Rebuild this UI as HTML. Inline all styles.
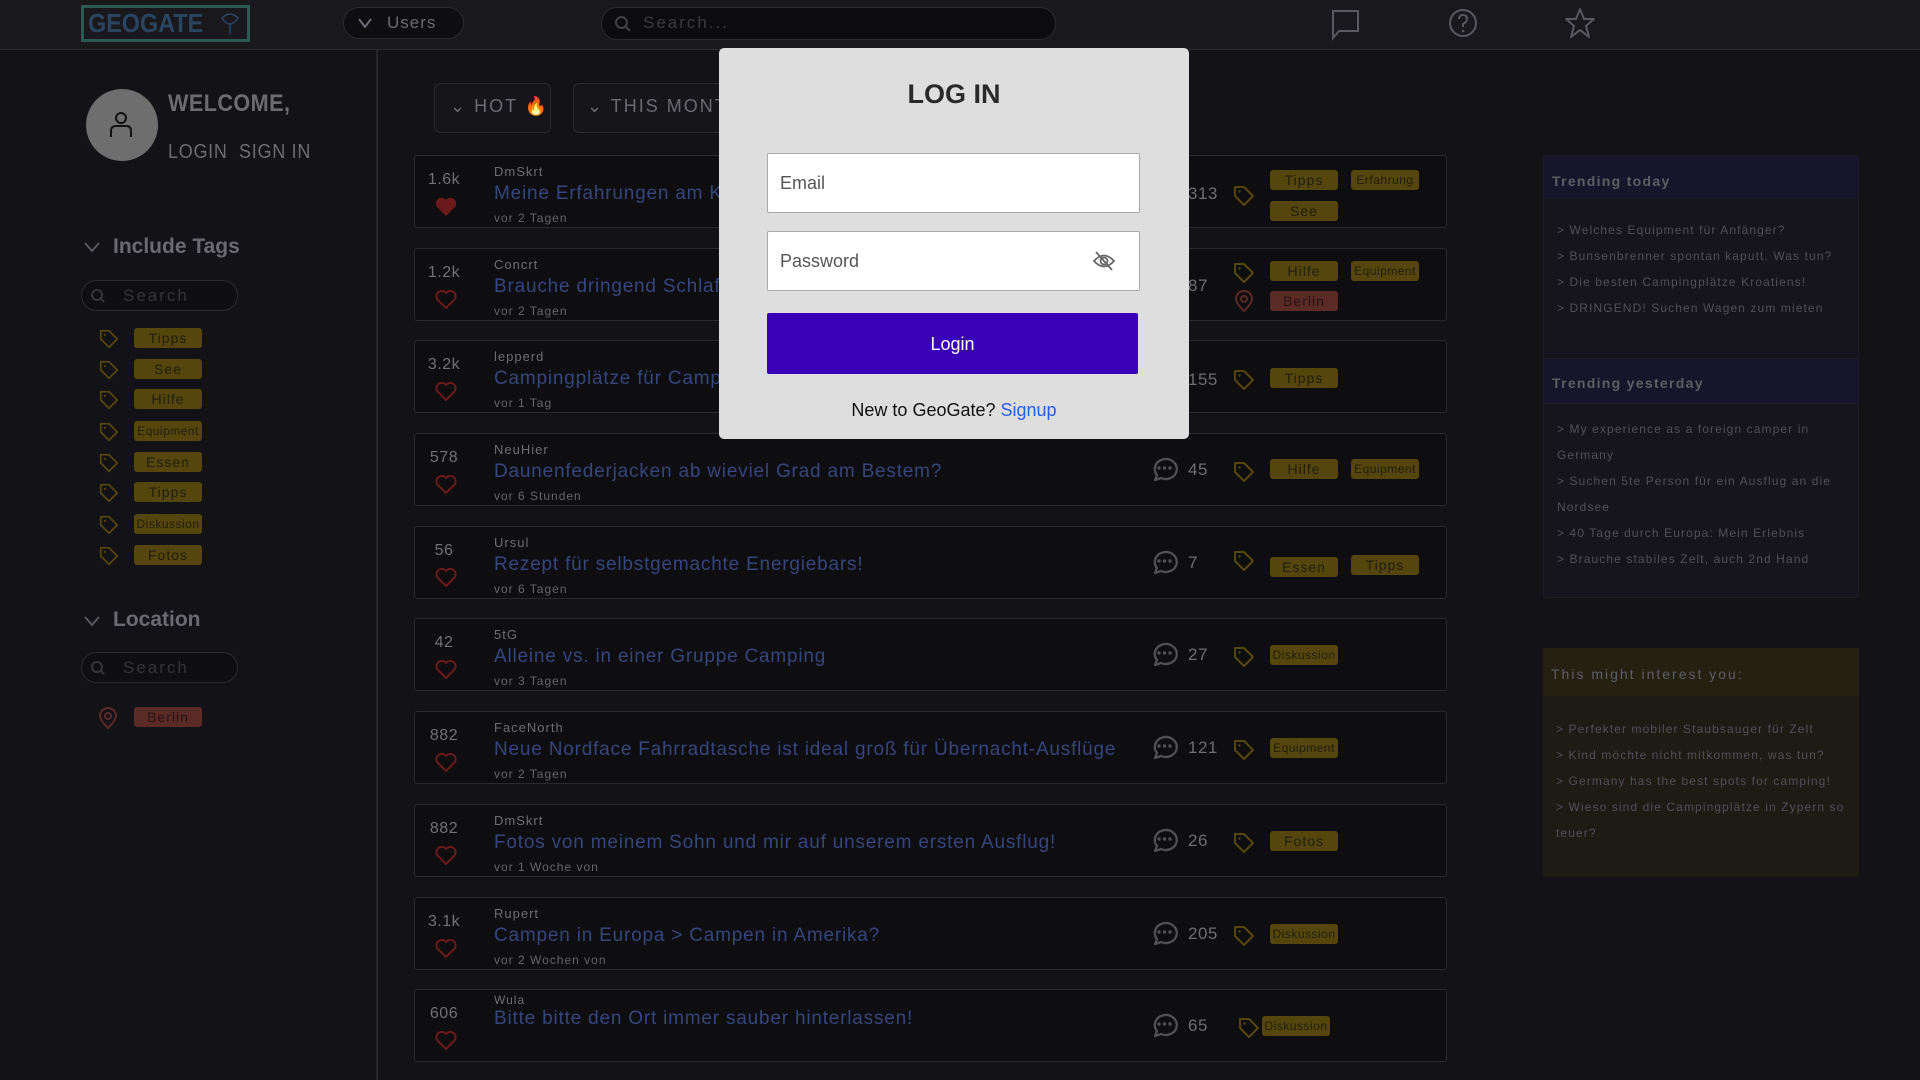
<!DOCTYPE html>
<html><head><meta charset="utf-8"><style>
*{margin:0;padding:0;box-sizing:border-box}
body{width:1920px;height:1080px;overflow:hidden;background:#121217;font-family:"Liberation Sans",sans-serif;position:relative}
.a{position:absolute}
.hdr{left:0;top:0;width:1920px;height:50px;background:#19191d;border-bottom:1px solid #2a2a2e}
.pill{border:1px solid #2c2c30;border-radius:16px;background:#0e0e11}
.tag{position:absolute;width:68px;height:20px;background:#54460c;border-radius:3px;color:#221d0c;font-size:14px;text-align:center;line-height:20px;letter-spacing:1px}
.tag.sm{font-size:12px;letter-spacing:.5px}
.loc{background:#5a2a26;color:#261412}
.card{position:absolute;left:414px;width:1033px;height:73px;border:1px solid #2a2a2e;border-radius:3px;background:#0e0e11}
.sc{position:absolute;left:0;width:58px;text-align:center;top:15px;color:#707075;font-size:16px;letter-spacing:.5px}
.hr{position:absolute;left:19px;top:38px}
.au{position:absolute;left:79px;top:8px;color:#6e6e72;font-size:13px;letter-spacing:1px}
.ti{position:absolute;left:79px;top:27px;color:#36457c;font-size:19px;letter-spacing:.8px;white-space:nowrap}
.dt{position:absolute;left:79px;top:55px;color:#66666a;font-size:12px;letter-spacing:1px}
.cm{position:absolute;left:734px;top:20px}
.cn{position:absolute;left:773px;top:26px;color:#6e6e72;font-size:17px;letter-spacing:.5px}
.ti2{position:absolute;left:817px;top:26px}
.rp{left:1543px;width:316px;border-radius:3px}
.rp .h{color:#5e5e66;font-weight:bold;font-size:14px;letter-spacing:1.3px;padding-left:8px}
.rp .i{color:#505058;font-size:12px;letter-spacing:1.1px;line-height:26px;padding-left:13px;padding-right:10px}
</style></head><body>
<div class="a hdr"></div>
<div class="a" style="left:81px;top:5px;width:169px;height:37px;border:3px solid #2b5a52"></div>
<div class="a" style="left:88px;top:8px;font-size:26px;font-weight:bold;color:#2b4560;transform:scaleX(.9);transform-origin:left">GEOGATE</div>
<svg class="a" style="left:219px;top:12px" width="22" height="24" viewBox="0 0 22 24"><path d="M3 6 Q11 -2 19 6 Q15 12 11 12 Q7 12 3 6Z M11 12 V22" fill="none" stroke="#2b4560" stroke-width="1.5"/></svg>
<div class="a pill" style="left:343px;top:7px;width:121px;height:32px"></div>
<svg class="a" style="left:357px;top:16px" width="16" height="14"><path d="M2 3 L8 11 L14 3" fill="none" stroke="#6a6a70" stroke-width="2"/></svg>
<div class="a" style="left:387px;top:13px;color:#6a6a70;font-size:17px;letter-spacing:1px">Users</div>
<div class="a pill" style="left:601px;top:7px;width:455px;height:33px;background:#0c0c0e"></div>
<svg class="a" style="left:614px;top:15px" width="18" height="18"><circle cx="7.5" cy="7.5" r="5.5" fill="none" stroke="#404046" stroke-width="2"/><path d="M12 12 L16 16" stroke="#404046" stroke-width="2"/></svg>
<div class="a" style="left:643px;top:13px;color:#3a3a40;font-size:17px;letter-spacing:2px">Search...</div>
<svg class="a" style="left:1330px;top:9px" width="30" height="32"><path d="M2 2 H28 V22 H9 L3 29 V2Z" fill="none" stroke="#58585e" stroke-width="2"/></svg>
<svg class="a" style="left:1448px;top:8px" width="30" height="30"><circle cx="15" cy="15" r="13" fill="none" stroke="#58585e" stroke-width="2"/><path d="M11 11 Q11 7 15 7 Q19 7 19 11 Q19 14 15 16 V19" fill="none" stroke="#58585e" stroke-width="2"/><circle cx="15" cy="23" r="1.3" fill="#58585e"/></svg>
<svg class="a" style="left:1564px;top:7px" width="32" height="32"><path d="M16 2 L20 12 L30 12 L22 19 L25 30 L16 23 L7 30 L10 19 L2 12 L12 12Z" fill="none" stroke="#58585e" stroke-width="2" stroke-linejoin="round"/></svg>

<div class="a" style="left:376px;top:50px;width:2px;height:1030px;background:#26262a"></div>
<div class="a" style="left:86px;top:89px;width:72px;height:72px;border-radius:50%;background:#6e6e6e"></div>
<svg class="a" style="left:108px;top:110px" width="26" height="30"><circle cx="13" cy="8" r="5" fill="none" stroke="#111" stroke-width="2"/><path d="M3 27 V21 Q3 16 8 16 H18 Q23 16 23 21 V27" fill="none" stroke="#111" stroke-width="2"/></svg>
<div class="a" style="left:168px;top:90px;color:#6c6c70;font-size:24px;font-weight:bold;letter-spacing:.5px;transform:scaleX(.9);transform-origin:left">WELCOME,</div>
<div class="a" style="left:168px;top:141px;color:#6c6c70;font-size:20px;letter-spacing:.8px;transform:scaleX(.9);transform-origin:left">LOGIN&nbsp; SIGN IN</div>

<svg class="a" style="left:83px;top:240px" width="18" height="14"><path d="M2 3 L9 11 L16 3" fill="none" stroke="#58585e" stroke-width="2"/></svg>
<div class="a" style="left:113px;top:235px;color:#6a6a70;font-size:21px;font-weight:bold">Include Tags</div>
<div class="a pill" style="left:81px;top:280px;width:157px;height:31px;background:#0f0f12"></div>
<svg class="a" style="left:90px;top:288px" width="16" height="16"><circle cx="7" cy="7" r="5" fill="none" stroke="#34343a" stroke-width="2"/><path d="M11 11 L14 14" stroke="#34343a" stroke-width="2"/></svg>
<div class="a" style="left:123px;top:286px;color:#34343a;font-size:17px;letter-spacing:2px">Search</div>

<svg width="0" height="0" style="position:absolute"><defs>
<symbol id="tg" viewBox="0 0 24 24"><path d="M3 3 H12 L21 12 L12 21 L3 12Z" fill="none" stroke="currentColor" stroke-width="2" stroke-linejoin="round"/><circle cx="7.5" cy="7.5" r="1.2" fill="currentColor"/></symbol>
<symbol id="pin" viewBox="0 0 24 24"><path d="M12 22 Q4 14 4 10 A8 8 0 0 1 20 10 Q20 14 12 22Z" fill="none" stroke="currentColor" stroke-width="2"/><circle cx="12" cy="10" r="3" fill="none" stroke="currentColor" stroke-width="2"/></symbol>
<symbol id="ht" viewBox="0 0 24 24"><path d="M12 21 L3.5 12.5 A5 5 0 0 1 12 6 A5 5 0 0 1 20.5 12.5Z" fill="none" stroke="currentColor" stroke-width="2" stroke-linejoin="round"/></symbol>
<symbol id="cb" viewBox="0 0 30 30"><path d="M6 26 L8 21 A11 10 0 1 1 12 24 Z" fill="none" stroke="currentColor" stroke-width="2.3" stroke-linejoin="round"/><circle cx="10" cy="14" r="1.7" fill="currentColor"/><circle cx="15.5" cy="14" r="1.7" fill="currentColor"/><circle cx="21" cy="14" r="1.7" fill="currentColor"/></symbol>
</defs></svg>

<svg class="a" style="left:98px;top:328px;color:#54460c" width="22" height="22"><use href="#tg"/></svg>
<svg class="a" style="left:98px;top:359px;color:#54460c" width="22" height="22"><use href="#tg"/></svg>
<svg class="a" style="left:98px;top:389px;color:#54460c" width="22" height="22"><use href="#tg"/></svg>
<svg class="a" style="left:98px;top:421px;color:#54460c" width="22" height="22"><use href="#tg"/></svg>
<svg class="a" style="left:98px;top:452px;color:#54460c" width="22" height="22"><use href="#tg"/></svg>
<svg class="a" style="left:98px;top:482px;color:#54460c" width="22" height="22"><use href="#tg"/></svg>
<svg class="a" style="left:98px;top:514px;color:#54460c" width="22" height="22"><use href="#tg"/></svg>
<svg class="a" style="left:98px;top:545px;color:#54460c" width="22" height="22"><use href="#tg"/></svg>
<div class="tag" style="left:134px;top:328px">Tipps</div>
<div class="tag" style="left:134px;top:359px">See</div>
<div class="tag" style="left:134px;top:389px">Hilfe</div>
<div class="tag sm" style="left:134px;top:421px">Equipment</div>
<div class="tag" style="left:134px;top:452px">Essen</div>
<div class="tag" style="left:134px;top:482px">Tipps</div>
<div class="tag sm" style="left:134px;top:514px">Diskussion</div>
<div class="tag" style="left:134px;top:545px">Fotos</div>

<svg class="a" style="left:83px;top:614px" width="18" height="14"><path d="M2 3 L9 11 L16 3" fill="none" stroke="#58585e" stroke-width="2"/></svg>
<div class="a" style="left:113px;top:608px;color:#6a6a70;font-size:21px;font-weight:bold">Location</div>
<div class="a pill" style="left:81px;top:652px;width:157px;height:31px;background:#0f0f12"></div>
<svg class="a" style="left:90px;top:660px" width="16" height="16"><circle cx="7" cy="7" r="5" fill="none" stroke="#34343a" stroke-width="2"/><path d="M11 11 L14 14" stroke="#34343a" stroke-width="2"/></svg>
<div class="a" style="left:123px;top:658px;color:#34343a;font-size:17px;letter-spacing:2px">Search</div>
<svg class="a" style="left:96px;top:706px;color:#5a2a26" width="24" height="24"><use href="#pin"/></svg>
<div class="tag loc" style="left:134px;top:707px">Berlin</div>

<div class="a" style="left:434px;top:83px;width:117px;height:50px;border:1px solid #2a2a2e;border-radius:6px;background:#16161a"></div>
<div class="a" style="left:450px;top:96px;color:#6a6a70;font-size:18px;letter-spacing:2px">&#8964; HOT <span style="color:#8a3a10">&#128293;</span></div>
<div class="a" style="left:573px;top:83px;width:160px;height:50px;border:1px solid #2a2a2e;border-radius:6px;background:#16161a"></div>
<div class="a" style="left:587px;top:96px;color:#6a6a70;font-size:18px;letter-spacing:2px">&#8964; THIS MONTH</div>

<div class="card" style="top:155px"><div class="sc">1.6k</div><svg class="hr" width="24" height="24"><path d="M12 22 L3 13 A5.5 5.5 0 0 1 12 6 A5.5 5.5 0 0 1 21 13Z" fill="#6a1a1a"/></svg><div class="au">DmSkrt</div><div class="ti">Meine Erfahrungen am Kap</div><div class="dt">vor 2 Tagen</div>
<div class="cn" style="top:28px">313</div><svg class="ti2" style="top:28px;color:#54460c" width="24" height="24"><use href="#tg"/></svg>
<div class="tag" style="left:855px;top:14px">Tipps</div><div class="tag sm" style="left:936px;top:14px">Erfahrung</div><div class="tag" style="left:855px;top:45px">See</div></div>

<div class="card" style="top:248px"><div class="sc">1.2k</div><svg class="hr" width="24" height="24" style="color:#6a1a1a"><use href="#ht"/></svg><div class="au">Concrt</div><div class="ti">Brauche dringend Schlafsack</div><div class="dt">vor 2 Tagen</div>
<div class="cn" style="top:27px">87</div><svg class="ti2" style="top:12px;color:#54460c" width="24" height="24"><use href="#tg"/></svg><svg class="ti2" style="top:40px;color:#5a2a26" width="24" height="24"><use href="#pin"/></svg>
<div class="tag" style="left:855px;top:12px">Hilfe</div><div class="tag sm" style="left:936px;top:12px">Equipment</div><div class="tag loc" style="left:855px;top:42px">Berlin</div></div>

<div class="card" style="top:340px"><div class="sc">3.2k</div><svg class="hr" width="24" height="24" style="color:#6a1a1a"><use href="#ht"/></svg><div class="au">lepperd</div><div class="ti">Campingplätze für Camper</div><div class="dt">vor 1 Tag</div>
<div class="cn" style="top:29px">155</div><svg class="ti2" style="top:27px;color:#54460c" width="24" height="24"><use href="#tg"/></svg>
<div class="tag" style="left:855px;top:27px">Tipps</div></div>

<div class="card" style="top:433px"><div class="sc">578</div><svg class="hr" width="24" height="24" style="color:#6a1a1a"><use href="#ht"/></svg><div class="au">NeuHier</div><div class="ti">Daunenfederjacken ab wieviel Grad am Bestem?</div><div class="dt">vor 6 Stunden</div>
<svg class="cm" width="30" height="30" style="color:#505055"><use href="#cb"/></svg><div class="cn">45</div><svg class="ti2" style="color:#54460c" width="24" height="24"><use href="#tg"/></svg>
<div class="tag" style="left:855px;top:25px">Hilfe</div><div class="tag sm" style="left:936px;top:25px">Equipment</div></div>

<div class="card" style="top:526px"><div class="sc">56</div><svg class="hr" width="24" height="24" style="color:#6a1a1a"><use href="#ht"/></svg><div class="au">Ursul</div><div class="ti">Rezept für selbstgemachte Energiebars!</div><div class="dt">vor 6 Tagen</div>
<svg class="cm" width="30" height="30" style="color:#505055"><use href="#cb"/></svg><div class="cn">7</div><svg class="ti2" style="top:22px;color:#54460c" width="24" height="24"><use href="#tg"/></svg>
<div class="tag" style="left:855px;top:30px">Essen</div><div class="tag" style="left:936px;top:28px">Tipps</div></div>

<div class="card" style="top:618px"><div class="sc">42</div><svg class="hr" width="24" height="24" style="color:#6a1a1a"><use href="#ht"/></svg><div class="au">5tG</div><div class="ti">Alleine vs. in einer Gruppe Camping</div><div class="dt">vor 3 Tagen</div>
<svg class="cm" width="30" height="30" style="color:#505055"><use href="#cb"/></svg><div class="cn">27</div><svg class="ti2" style="color:#54460c" width="24" height="24"><use href="#tg"/></svg>
<div class="tag sm" style="left:855px;top:26px">Diskussion</div></div>

<div class="card" style="top:711px"><div class="sc">882</div><svg class="hr" width="24" height="24" style="color:#6a1a1a"><use href="#ht"/></svg><div class="au">FaceNorth</div><div class="ti">Neue Nordface Fahrradtasche ist ideal groß für Übernacht-Ausflüge</div><div class="dt">vor 2 Tagen</div>
<svg class="cm" width="30" height="30" style="color:#505055"><use href="#cb"/></svg><div class="cn">121</div><svg class="ti2" style="color:#54460c" width="24" height="24"><use href="#tg"/></svg>
<div class="tag sm" style="left:855px;top:26px">Equipment</div></div>

<div class="card" style="top:804px"><div class="sc">882</div><svg class="hr" width="24" height="24" style="color:#6a1a1a"><use href="#ht"/></svg><div class="au">DmSkrt</div><div class="ti">Fotos von meinem Sohn und mir auf unserem ersten Ausflug!</div><div class="dt">vor 1 Woche von</div>
<svg class="cm" width="30" height="30" style="color:#505055"><use href="#cb"/></svg><div class="cn">26</div><svg class="ti2" style="color:#54460c" width="24" height="24"><use href="#tg"/></svg>
<div class="tag" style="left:855px;top:26px">Fotos</div></div>

<div class="card" style="top:897px"><div class="sc">3.1k</div><svg class="hr" width="24" height="24" style="color:#6a1a1a"><use href="#ht"/></svg><div class="au">Rupert</div><div class="ti">Campen in Europa &gt; Campen in Amerika?</div><div class="dt">vor 2 Wochen von</div>
<svg class="cm" width="30" height="30" style="color:#505055"><use href="#cb"/></svg><div class="cn">205</div><svg class="ti2" style="color:#54460c" width="24" height="24"><use href="#tg"/></svg>
<div class="tag sm" style="left:855px;top:26px">Diskussion</div></div>

<div class="card" style="top:989px"><div class="sc">606</div><svg class="hr" width="24" height="24" style="color:#6a1a1a"><use href="#ht"/></svg><div class="au" style="top:3px;font-size:12px">Wula</div><div class="ti" style="top:18px">Bitte bitte den Ort immer sauber hinterlassen!</div>
<svg class="cm" width="30" height="30" style="color:#505055"><use href="#cb"/></svg><div class="cn">65</div><svg class="ti2" style="left:822px;color:#54460c" width="24" height="24"><use href="#tg"/></svg>
<div class="tag sm" style="left:847px;top:26px">Diskussion</div></div>

<div class="a rp" style="top:155px;height:443px;background:#16141d;border:1px solid #1e1b26">
<div style="height:43px;background:#17152a;border-bottom:1px solid #201c2a;padding-top:17px" class="h">Trending today</div>
<div class="i" style="padding-top:18px">&gt; Welches Equipment für Anfänger?<br>&gt; Bunsenbrenner spontan kaputt. Was tun?<br>&gt; Die besten Campingplätze Kroatiens!<br>&gt; DRINGEND! Suchen Wagen zum mieten</div>
<div style="position:absolute;top:202px;left:0;right:0;height:46px;background:#17152a;border-top:1px solid #201c2a;border-bottom:1px solid #201c2a;padding-top:16px" class="h">Trending yesterday</div>
<div class="i" style="position:absolute;top:260px;left:0">&gt; My experience as a foreign camper in Germany<br>&gt; Suchen 5te Person für ein Ausflug an die Nordsee<br>&gt; 40 Tage durch Europa: Mein Erlebnis<br>&gt; Brauche stabiles Zelt, auch 2nd Hand</div>
</div>
<div class="a rp" style="top:648px;height:229px;background:#1e1b14">
<div style="height:48px;background:#252012;padding-top:18px;font-weight:normal;letter-spacing:2px" class="h">This might interest you:</div>
<div class="i" style="padding-top:20px">&gt; Perfekter mobiler Staubsauger für Zelt<br>&gt; Kind möchte nicht mitkommen, was tun?<br>&gt; Germany has the best spots for camping!<br>&gt; Wieso sind die Campingplätze in Zypern so teuer?</div>
</div>

<div class="a" style="left:719px;top:48px;width:470px;height:391px;background:#dedede;border-radius:5px"></div>
<div class="a" style="left:719px;top:79px;width:470px;text-align:center;font-size:27px;font-weight:bold;color:#2a2a2a">LOG IN</div>
<div class="a" style="left:767px;top:153px;width:373px;height:60px;background:#fff;border:1px solid #aaa;border-radius:2px"></div>
<div class="a" style="left:780px;top:173px;font-size:18px;color:#555">Email</div>
<div class="a" style="left:767px;top:231px;width:373px;height:60px;background:#fff;border:1px solid #aaa;border-radius:2px"></div>
<div class="a" style="left:780px;top:251px;font-size:18px;color:#555">Password</div>
<svg class="a" style="left:1091px;top:248px" width="26" height="26"><path d="M3 13 Q13 2 23 13 Q13 24 3 13Z" fill="none" stroke="#666" stroke-width="1.8"/><circle cx="13" cy="13" r="3.5" fill="none" stroke="#666" stroke-width="1.8"/><path d="M5 4 L21 22" stroke="#666" stroke-width="1.8"/></svg>
<div class="a" style="left:767px;top:313px;width:371px;height:61px;background:#3a00b8;border-radius:2px"></div>
<div class="a" style="left:767px;top:334px;width:371px;text-align:center;font-size:18px;color:#fff">Login</div>
<div class="a" style="left:719px;top:400px;width:470px;text-align:center;font-size:18px;color:#111">New to GeoGate? <span style="color:#2a5af0">Signup</span></div>
</body></html>
